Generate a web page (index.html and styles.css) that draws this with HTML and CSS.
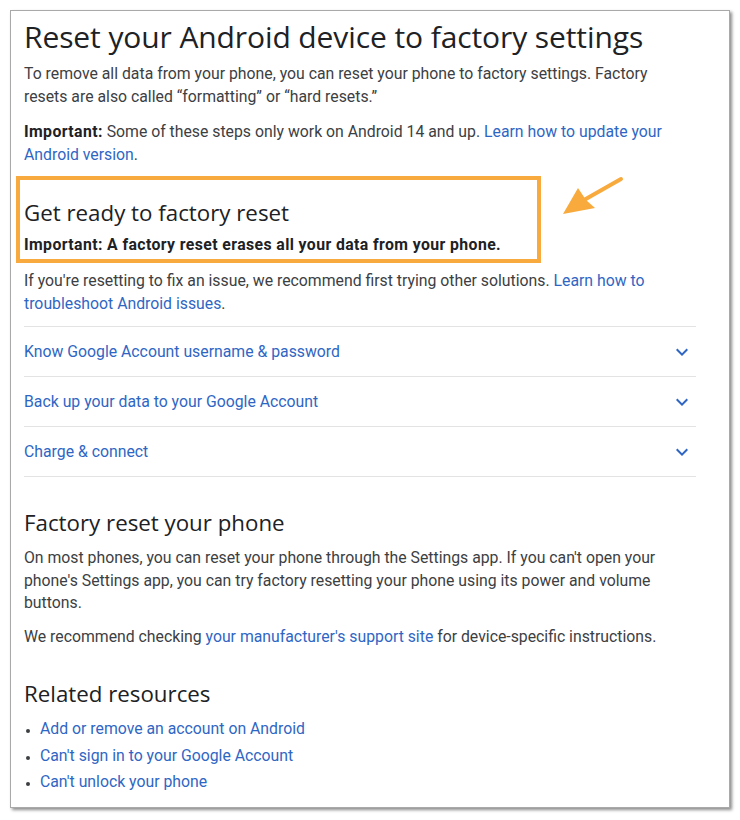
FILE: index.html
```html
<!DOCTYPE html>
<html lang="en">
<head>
<meta charset="utf-8">
<title>Reset your Android device to factory settings</title>
<link rel="stylesheet" href="styles.css">
</head>
<body>
<div class="frame">
  <div class="content">
    <h1 class="title">Reset your Android device to factory settings</h1>
    <p class="para first">To remove all data from your phone, you can reset your phone to factory settings. Factory resets are also called “formatting” or “hard resets.”</p>
    <p class="para"><b>Important:</b> Some of these steps only work on Android 14 and up. <a class="link" href="#">Learn how to update your Android version</a>.</p>

    <div class="highlight">
      <h2 class="heading">Get ready to factory reset</h2>
      <p class="para strong"><b>Important: A factory reset erases all your data from your phone.</b></p>
    </div>

    <p class="para after-box">If you're resetting to fix an issue, we recommend first trying other solutions. <a class="link" href="#">Learn how to troubleshoot Android issues</a>.</p>

    <div class="accordion">
      <div class="acc-row">
        <span class="acc-label">Know Google Account username &amp; password</span>
        <svg class="chev" viewBox="0 0 24 24" width="24" height="24"><path d="M16.59 8.59L12 13.17 7.41 8.59 6 10l6 6 6-6z"/></svg>
      </div>
      <div class="acc-row">
        <span class="acc-label">Back up your data to your Google Account</span>
        <svg class="chev" viewBox="0 0 24 24" width="24" height="24"><path d="M16.59 8.59L12 13.17 7.41 8.59 6 10l6 6 6-6z"/></svg>
      </div>
      <div class="acc-row">
        <span class="acc-label">Charge &amp; connect</span>
        <svg class="chev" viewBox="0 0 24 24" width="24" height="24"><path d="M16.59 8.59L12 13.17 7.41 8.59 6 10l6 6 6-6z"/></svg>
      </div>
    </div>

    <h2 class="heading section">Factory reset your phone</h2>
    <p class="para sub">On most phones, you can reset your phone through the Settings app. If you can't open your phone's Settings app, you can try factory resetting your phone using its power and volume buttons.</p>
    <p class="para next">We recommend checking <a class="link" href="#">your manufacturer's support site</a> for device-specific instructions.</p>

    <h2 class="heading section">Related resources</h2>
    <ul class="related">
      <li><a class="link" href="#">Add or remove an account on Android</a></li>
      <li><a class="link" href="#">Can't sign in to your Google Account</a></li>
      <li><a class="link" href="#">Can't unlock your phone</a></li>
    </ul>
  </div>

  <svg class="arrow" viewBox="0 0 80 55" width="80" height="55">
    <line x1="34" y1="30" x2="71" y2="9" stroke="#f8aa3c" stroke-width="4" stroke-linecap="round"/>
    <polygon points="13,44 28,18 36,30 45,38" fill="#f8aa3c"/>
  </svg>
</div>
</body>
</html>
```
FILE: styles.css
```css
html, body {
  margin: 0;
  padding: 0;
  background: #ffffff;
}

body {
  font-family: Roboto, "Liberation Sans", Arial, sans-serif;
  color: #202124;
}

.frame {
  position: relative;
  margin: 10px;
  width: 720px;
  height: 798px;
  box-sizing: border-box;
  border: 1px solid #a9a9a9;
  box-shadow: 2px 2px 3px rgba(0, 0, 0, 0.45);
  padding: 8px 14px 0 13px;
  background: #fff;
}

.content {
  width: 672px;
}

.title {
  margin: 0;
  font-family: "Open Sans", Roboto, sans-serif;
  font-weight: 400;
  font-size: 30px;
  line-height: 36px;
  color: #202124;
  letter-spacing: -0.1px;
}

.para {
  margin: 13px 0 0;
  max-width: 664px;
  font-size: 15.8px;
  line-height: 22.5px;
  color: #3c4043;
}

.para.first {
  margin-top: 8px;
}

.para.sub {
  margin-top: 10px;
}

.para.next {
  margin-top: 11px;
}

.para b {
  font-weight: 700;
  color: #202124;
  letter-spacing: 0.4px;
}

.link {
  color: #2f66c4;
  text-decoration: none;
}

.highlight {
  margin: 10px 0 0 -8px;
  width: 525px;
  height: 87px;
  box-sizing: border-box;
  border: 4px solid #f9aa3e;
  padding: 19px 0 0 4px;
}

.heading {
  margin: 0;
  font-family: "Open Sans", Roboto, sans-serif;
  font-weight: 400;
  font-size: 22.3px;
  line-height: 28px;
  color: #202124;
}

.para.strong {
  margin-top: 7px;
}

.para.after-box {
  margin-top: 7px;
}

.accordion {
  margin-top: 11px;
  border-bottom: 1px solid #e3e3e3;
}

.acc-row {
  display: flex;
  align-items: center;
  justify-content: space-between;
  height: 50px;
  box-sizing: border-box;
  border-top: 1px solid #e3e3e3;
  padding-right: 2px;
}

.acc-label {
  font-size: 15.8px;
  color: #2f66c4;
}

.chev {
  fill: #2f66c4;
  width: 24px;
  height: 24px;
}

.heading.section {
  margin-top: 32px;
}

.related {
  margin: 10px 0 0;
  padding: 0 0 0 16px;
  font-size: 15.8px;
  line-height: 22px;
}

.related li {
  margin-bottom: 4.5px;
  color: #3c4043;
}

.related li::marker {
  font-size: 12px;
}

.arrow {
  position: absolute;
  left: 539px;
  top: 159px;
}
```
